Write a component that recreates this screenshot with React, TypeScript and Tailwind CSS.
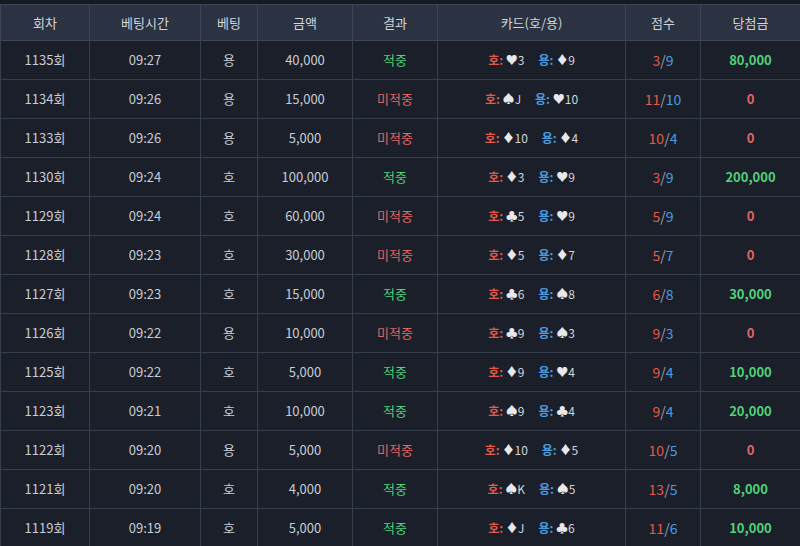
const rows: [string, string, string, string, boolean, string, string, string, string, number, number, string][] = [
  ["1135", "09:27", "용", "40,000", true, "♥", "3", "♦", "9", 3, 9, "80,000"],
  ["1134", "09:26", "용", "15,000", false, "♠", "J", "♥", "10", 11, 10, "0"],
  ["1133", "09:26", "용", "5,000", false, "♦", "10", "♦", "4", 10, 4, "0"],
  ["1130", "09:24", "호", "100,000", true, "♦", "3", "♥", "9", 3, 9, "200,000"],
  ["1129", "09:24", "호", "60,000", false, "♣", "5", "♥", "9", 5, 9, "0"],
  ["1128", "09:23", "호", "30,000", false, "♦", "5", "♦", "7", 5, 7, "0"],
  ["1127", "09:23", "호", "15,000", true, "♣", "6", "♠", "8", 6, 8, "30,000"],
  ["1126", "09:22", "용", "10,000", false, "♣", "9", "♠", "3", 9, 3, "0"],
  ["1125", "09:22", "호", "5,000", true, "♦", "9", "♥", "4", 9, 4, "10,000"],
  ["1123", "09:21", "호", "10,000", true, "♠", "9", "♣", "4", 9, 4, "20,000"],
  ["1122", "09:20", "용", "5,000", false, "♦", "10", "♦", "5", 10, 5, "0"],
  ["1121", "09:20", "호", "4,000", true, "♠", "K", "♠", "5", 13, 5, "8,000"],
  ["1119", "09:19", "호", "5,000", true, "♦", "J", "♣", "6", 11, 6, "10,000"],
];

const heads = ["회차", "베팅시간", "베팅", "금액", "결과", "카드(호/용)", "점수", "당첨금"];
const widths = ["w-[89px]", "w-[111px]", "w-[57px]", "w-[95px]", "w-[85px]", "w-[188px]", "w-[75px]", "w-[100px]"];

export default function App() {
  return (
    <div className="w-[800px] h-[546px] overflow-hidden bg-[#161a22] pt-[4px]" style={{ fontFamily: '"Noto Sans CJK KR", "Noto Sans", sans-serif' }}>
      <table className="w-[800px] border-collapse table-fixed text-[13px] text-[#c8ccd4]">
        <thead>
          <tr className="bg-[#2b3242] h-[36px]">
            {heads.map((h, i) => (
              <th key={h} className={`${widths[i]} font-normal text-[#d0d4dc] border border-[#3d4556] text-center`}>{h}</th>
            ))}
          </tr>
        </thead>
        <tbody>
          {rows.map((r) => (
            <tr key={r[0]} className="bg-[#1b1f29] h-[39px]">
              <td className="border border-[#363d4c] text-center">{r[0]}회</td>
              <td className="border border-[#363d4c] text-center">{r[1]}</td>
              <td className="border border-[#363d4c] text-center">{r[2]}</td>
              <td className="border border-[#363d4c] text-center">{r[3]}</td>
              <td className={`border border-[#363d4c] text-center ${r[4] ? "text-[#4fd27a]" : "text-[#e06565]"}`}>{r[4] ? "적중" : "미적중"}</td>
              <td className="border border-[#363d4c] text-center text-[12px]">
                <span className="text-[#e25a4a] font-bold">호: </span>
                <span className="text-[#e8e8ec]">{r[5]}</span>
                <span className="text-[#d0d4dc]">{r[6]}</span>
                <span className="inline-block w-[14px]" />
                <span className="text-[#4a9be0] font-bold">용: </span>
                <span className="text-[#e8e8ec]">{r[7]}</span>
                <span className="text-[#d0d4dc]">{r[8]}</span>
              </td>
              <td className="border border-[#363d4c] text-center text-[14px]">
                <span className="text-[#e25a4a]">{r[9]}</span>
                <span className="text-[#9aa0aa]">/</span>
                <span className="text-[#4a9be0]">{r[10]}</span>
              </td>
              <td className={`border border-[#363d4c] text-center font-bold ${r[11] === "0" ? "text-[#e06565]" : "text-[#4fd27a]"}`}>{r[11]}</td>
            </tr>
          ))}
        </tbody>
      </table>
    </div>
  );
}
